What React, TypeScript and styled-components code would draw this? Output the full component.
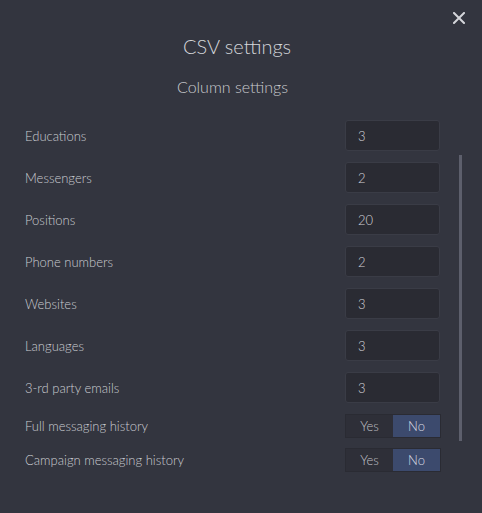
import styled, { createGlobalStyle } from "styled-components";

const GlobalStyle = createGlobalStyle`
  html, body {
    margin: 0;
    padding: 0;
    background: #33353f;
  }
  body {
    font-family: Lato, "Noto Sans", sans-serif;
  }
`;

type NumberField = { label: string; value: string };

const numberFields: NumberField[] = [
  { label: "Educations", value: "3" },
  { label: "Messengers", value: "2" },
  { label: "Positions", value: "20" },
  { label: "Phone numbers", value: "2" },
  { label: "Websites", value: "3" },
  { label: "Languages", value: "3" },
  { label: "3-rd party emails", value: "3" },
];

const toggleFields = ["Full messaging history", "Campaign messaging history"];

function App() {
  return (
    <>
      <GlobalStyle />
      <Modal>
        <CloseButton aria-label="Close">
          <svg width="12" height="12" viewBox="0 0 12 12">
            <path
              d="M1 1L11 11M11 1L1 11"
              stroke="#d4d5da"
              strokeWidth="2"
              strokeLinecap="square"
            />
          </svg>
        </CloseButton>
        <Title>CSV settings</Title>

        <Body>
          <List>
            <Subtitle>Column settings</Subtitle>
            {numberFields.map((f) => (
              <Row key={f.label}>
                <Label>{f.label}</Label>
                <NumberInput defaultValue={f.value} />
              </Row>
            ))}
            {toggleFields.map((label) => (
              <ToggleRow key={label}>
                <Label>{label}</Label>
                <Toggle>
                  <ToggleOption>Yes</ToggleOption>
                  <ToggleOption $active>No</ToggleOption>
                </Toggle>
              </ToggleRow>
            ))}
          </List>
          <ScrollTrack>
            <ScrollThumb />
          </ScrollTrack>
        </Body>
      </Modal>
    </>
  );
}

export default App;

const Modal = styled.div`
  position: relative;
  width: 482px;
  height: 513px;
  background: #33353f;
  box-sizing: border-box;
  padding-top: 33px;
`;

const CloseButton = styled.button`
  position: absolute;
  top: 12px;
  right: 17px;
  width: 12px;
  height: 12px;
  padding: 0;
  border: none;
  background: none;
  display: flex;
  cursor: pointer;
`;

const Title = styled.h1`
  margin: 0;
  padding-right: 8px;
  font-size: 20px;
  line-height: 26px;
  font-weight: 300;
  color: #d4d5da;
  text-align: center;
`;

const Subtitle = styled.h2`
  margin: 0 0 22px;
  font-size: 16px;
  line-height: 22px;
  font-weight: 300;
  color: #c9cace;
  text-align: center;
`;

const Body = styled.div`
  display: flex;
  align-items: flex-start;
  padding: 17px 0 0 25px;
`;

const List = styled.div`
  width: 415px;
  display: flex;
  flex-direction: column;
`;

const Row = styled.div`
  display: flex;
  align-items: center;
  justify-content: space-between;
  height: 31px;
  margin-bottom: 11px;
`;

const ToggleRow = styled.div`
  display: flex;
  align-items: center;
  justify-content: space-between;
  height: 24px;
  margin-bottom: 10px;
`;

const Label = styled.span`
  font-size: 13px;
  font-weight: 300;
  color: #caccd1;
`;

const NumberInput = styled.input`
  box-sizing: border-box;
  width: 95px;
  height: 31px;
  padding: 0 0 0 12px;
  border: 1px solid #3a3c46;
  border-radius: 3px;
  background: #2a2b33;
  font-family: Lato, "Noto Sans", sans-serif;
  font-size: 13px;
  font-weight: 300;
  color: #d2d3d8;
  outline: none;
`;

const Toggle = styled.div`
  display: flex;
  width: 96px;
  height: 24px;
  margin-right: -1px;
  border: 1px solid #2a2b33;
  box-sizing: border-box;
`;

const ToggleOption = styled.div<{ $active?: boolean }>`
  flex: 1;
  display: flex;
  align-items: center;
  justify-content: center;
  font-size: 13px;
  font-weight: 300;
  background: ${(p) => (p.$active ? "#3c4a6d" : "#2e2f38")};
  color: ${(p) => (p.$active ? "#d8dbe3" : "#c0c1c7")};
`;

const ScrollTrack = styled.div`
  margin-left: 19px;
  width: 4px;
  padding-top: 79px;
`;

const ScrollThumb = styled.div`
  width: 3px;
  height: 286px;
  background: #5d5f6c;
`;
